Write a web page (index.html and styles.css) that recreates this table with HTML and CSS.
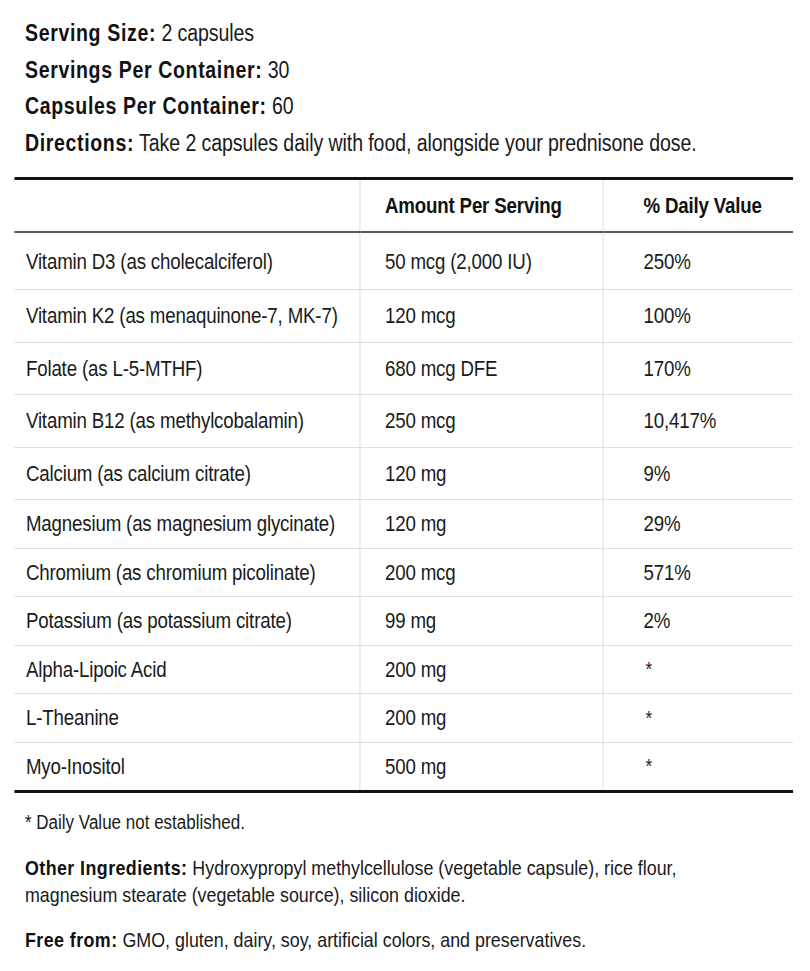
FILE: index.html
```html
<!DOCTYPE html>
<html lang="en">
<head>
<meta charset="utf-8">
<title>Supplement Facts</title>
<link rel="stylesheet" href="styles.css">
</head>
<body>
<div class="page">
<main class="label">
  <section class="meta">
    <p><b>Serving Size:</b> 2 capsules</p>
    <p><b>Servings Per Container:</b> 30</p>
    <p><b>Capsules Per Container:</b> 60</p>
    <p><b>Directions:</b> Take 2 capsules daily with food, alongside your prednisone dose.</p>
  </section>

  <table class="facts">
    <colgroup>
      <col class="w-name">
      <col class="w-amt">
      <col class="w-dv">
    </colgroup>
    <thead>
      <tr>
        <th class="c-name"></th>
        <th class="c-amt">Amount Per Serving</th>
        <th class="c-dv">% Daily Value</th>
      </tr>
    </thead>
    <tbody>
      <tr><td class="c-name">Vitamin D3 (as cholecalciferol)</td><td class="c-amt">50 mcg (2,000 IU)</td><td class="c-dv">250%</td></tr>
      <tr><td class="c-name">Vitamin K2 (as menaquinone-7, MK-7)</td><td class="c-amt">120 mcg</td><td class="c-dv">100%</td></tr>
      <tr><td class="c-name">Folate (as L-5-MTHF)</td><td class="c-amt">680 mcg DFE</td><td class="c-dv">170%</td></tr>
      <tr><td class="c-name">Vitamin B12 (as methylcobalamin)</td><td class="c-amt">250 mcg</td><td class="c-dv">10,417%</td></tr>
      <tr><td class="c-name">Calcium (as calcium citrate)</td><td class="c-amt">120 mg</td><td class="c-dv">9%</td></tr>
      <tr><td class="c-name">Magnesium (as magnesium glycinate)</td><td class="c-amt">120 mg</td><td class="c-dv">29%</td></tr>
      <tr><td class="c-name">Chromium (as chromium picolinate)</td><td class="c-amt">200 mcg</td><td class="c-dv">571%</td></tr>
      <tr><td class="c-name">Potassium (as potassium citrate)</td><td class="c-amt">99 mg</td><td class="c-dv">2%</td></tr>
      <tr><td class="c-name">Alpha-Lipoic Acid</td><td class="c-amt">200 mg</td><td class="c-dv star">*</td></tr>
      <tr><td class="c-name">L-Theanine</td><td class="c-amt">200 mg</td><td class="c-dv star">*</td></tr>
      <tr><td class="c-name">Myo-Inositol</td><td class="c-amt">500 mg</td><td class="c-dv star">*</td></tr>
    </tbody>
  </table>

  <section class="notes">
    <p class="foot">* Daily Value not established.</p>
    <p class="other"><span class="line"><b>Other Ingredients:</b> <span>Hydroxypropyl methylcellulose (vegetable capsule), rice flour,</span></span><span class="line">magnesium stearate (vegetable source), silicon dioxide.</span></p>
    <p class="free"><b>Free from:</b> <span>GMO, gluten, dairy, soy, artificial colors, and preservatives.</span></p>
  </section>
</main>
</div>
</body>
</html>
```

FILE: styles.css
```css
html, body {
  margin: 0;
  padding: 0;
  background: #ffffff;
}

body {
  font-family: "Liberation Sans", Arial, Helvetica, sans-serif;
  color: #1a1a1a;
}

.page {
  width: 100%;
  overflow: hidden;
}

/* The label is typeset in a condensed face: lay out at full width,
   then compress horizontally. */
.label {
  box-sizing: border-box;
  width: 940px;
  padding: 15px 0 0 16.5px;
  transform: scaleX(0.85);
  transform-origin: 0 0;
}

.meta {
  padding-left: 12.9px;
}

.meta p {
  margin: 0;
  font-size: 23px;
  line-height: 36.6px;
  letter-spacing: -0.1px;
}

.meta b {
  font-weight: 700;
  color: #111;
  letter-spacing: 0.75px;
}

.notes b {
  font-weight: 700;
  color: #111;
  letter-spacing: 0.5px;
}

.facts {
  margin-top: 16px;
  width: 916.5px;
  table-layout: fixed;
  border-collapse: collapse;
  border-top: 3px solid #111;
  border-bottom: 3px solid #111;
  font-size: 22px;
  letter-spacing: -0.2px;
}

.w-name { width: 406.5px; }
.w-amt { width: 286px; }
.w-dv { width: 224px; }

.facts th,
.facts td {
  text-align: left;
  padding: 0;
  vertical-align: middle;
  white-space: nowrap;
}

.facts th {
  height: 51px;
  font-weight: 700;
  color: #111;
  border-bottom: 2px solid #5a5a5a;
}

.facts td {
  border-bottom: 1px solid #dedede;
  height: 47.5px;
}

.facts tbody tr:first-child td {
  height: 54px;
  padding-top: 2px;
}

.facts tbody tr:nth-child(n+2):nth-child(-n+5) td {
  height: 51.5px;
}

.facts tbody tr:last-child td {
  border-bottom: none;
}

.c-name {
  padding-left: 14px !important;
}

.c-amt {
  padding-left: 29.4px !important;
  border-left: 1.2px solid #d8d8d8;
}

.c-dv {
  padding-left: 47.5px !important;
  border-left: 1.2px solid #d8d8d8;
}

.star {
  padding-left: 50px !important;
  font-size: 20px;
}

.notes {
  padding-left: 12.9px;
}

.notes p {
  margin: 0;
  font-size: 21px;
  line-height: 27px;
}

.foot {
  margin-top: 16px !important;
  font-size: 20px !important;
  line-height: 26px !important;
}

.other {
  margin-top: 19px !important;
}

.other .line {
  display: block;
  white-space: nowrap;
}

.free {
  margin-top: 18px !important;
}
```
